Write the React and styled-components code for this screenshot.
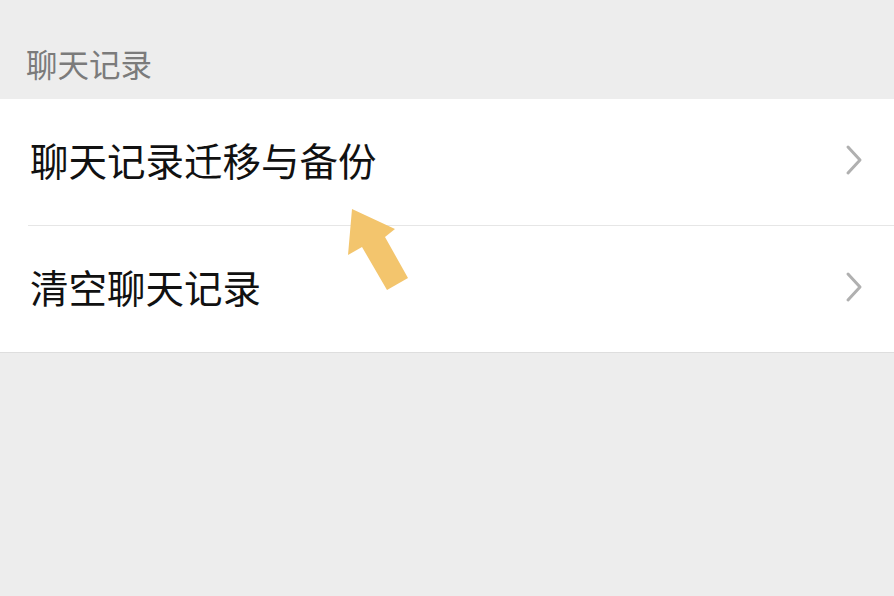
import styled, { createGlobalStyle } from "styled-components";

const GlobalStyle = createGlobalStyle`
  html, body {
    margin: 0;
    padding: 0;
    background: #ededed;
  }
  body {
    font-family: "Noto Sans CJK SC", "Noto Sans", sans-serif;
    width: 894px;
    height: 596px;
    overflow: hidden;
  }
`;

const Page = styled.div`
  position: relative;
  width: 894px;
  height: 596px;
  background: #ededed;
`;

const SectionTitle = styled.div`
  height: 99px;
  box-sizing: border-box;
  padding: 42px 0 0 26px;
  font-size: 31.5px;
  line-height: 42px;
  color: #7b7b7b;
`;

const Group = styled.div`
  background: #fff;
  border-bottom: 1px solid #dedede;
`;

const Row = styled.div`
  display: flex;
  align-items: center;
  justify-content: space-between;
  height: ${(p) => p.$height}px;
  margin-left: 28px;
  padding: 0 31px 5px 2px;
  box-sizing: border-box;
  border-bottom: ${(p) => (p.$divider ? "1px solid #e6e6e6" : "none")};
`;

const Label = styled.span`
  font-size: 38.5px;
  line-height: 1;
  color: #111;
`;

const Chevron = () => (
  <svg width="18" height="32" viewBox="0 0 18 32">
    <path d="M3 3 L15 16 L3 29" fill="none" stroke="#b0b0b0" strokeWidth="3" strokeLinecap="round" strokeLinejoin="round" />
  </svg>
);

const Pointer = styled.svg`
  position: absolute;
  left: 0;
  top: 0;
  pointer-events: none;
`;

export default function App() {
  return (
    <Page>
      <GlobalStyle />
      <SectionTitle>聊天记录</SectionTitle>
      <Group>
        <Row $height={127} $divider>
          <Label>聊天记录迁移与备份</Label>
          <Chevron />
        </Row>
        <Row $height={126}>
          <Label>清空聊天记录</Label>
          <Chevron />
        </Row>
      </Group>
      <Pointer width="894" height="596" viewBox="0 0 894 596">
        <polygon
          points="352,209 395,229 385,237 408,278 387,290 362,247 348,255"
          fill="#f3c56d"
        />
      </Pointer>
    </Page>
  );
}
